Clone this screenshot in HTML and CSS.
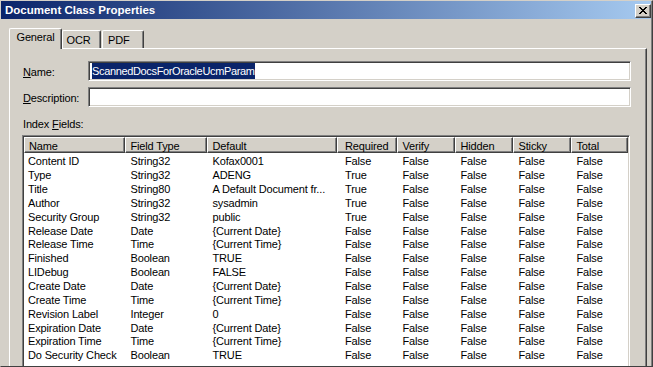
FILE: index.html
```html
<!DOCTYPE html>
<html lang="en">
<head>
    <meta charset="UTF-8">
    <title>Document Class Properties</title>
    <link rel="stylesheet" href="styles.css">
</head>
<body>
    <div class="window">
        <div class="titlebar">
            <span class="title">Document Class Properties</span>
            <button class="close" type="button">
                <svg width="14" height="12" viewBox="0 0 14 12" shape-rendering="crispEdges">
                    <path d="M3 2h2v1h-2z M9 2h2v1h-2z M4 3h2v1h-2z M8 3h2v1h-2z M5 4h4v1h-4z M6 5h2v1h-2z M5 6h4v1h-4z M4 7h2v1h-2z M8 7h2v1h-2z M3 8h2v1h-2z M9 8h2v1h-2z" fill="#000"/>
                </svg>
            </button>
        </div>

        <div class="client">
            <div class="tabs">
                <div class="tab tab-active">General</div>
                <div class="tab tab-ocr">OCR</div>
                <div class="tab tab-pdf">PDF</div>
            </div>

            <div class="panel">
                <div class="field">
                    <label><u>N</u>ame:</label>
                    <div class="textbox"><span class="selected">ScannedDocsForOracleUcmParam</span></div>
                </div>
                <div class="field field-desc">
                    <label><u>D</u>escription:</label>
                    <div class="textbox"></div>
                </div>

                <div class="list-label">Index <u>F</u>ields:</div>

                <div class="listview">
                    <div class="lv-row lv-header">
                        <span>Name</span><span>Field Type</span><span>Default</span><span>Required</span><span>Verify</span><span>Hidden</span><span>Sticky</span><span>Total</span>
                    </div>
                    <div class="lv-body">
                        <div class="lv-row"><span>Content ID</span><span>String32</span><span>Kofax0001</span><span>False</span><span>False</span><span>False</span><span>False</span><span>False</span></div>
                        <div class="lv-row"><span>Type</span><span>String32</span><span>ADENG</span><span>True</span><span>False</span><span>False</span><span>False</span><span>False</span></div>
                        <div class="lv-row"><span>Title</span><span>String80</span><span>A Default Document fr...</span><span>True</span><span>False</span><span>False</span><span>False</span><span>False</span></div>
                        <div class="lv-row"><span>Author</span><span>String32</span><span>sysadmin</span><span>True</span><span>False</span><span>False</span><span>False</span><span>False</span></div>
                        <div class="lv-row"><span>Security Group</span><span>String32</span><span>public</span><span>True</span><span>False</span><span>False</span><span>False</span><span>False</span></div>
                        <div class="lv-row"><span>Release Date</span><span>Date</span><span>{Current Date}</span><span>False</span><span>False</span><span>False</span><span>False</span><span>False</span></div>
                        <div class="lv-row"><span>Release Time</span><span>Time</span><span>{Current Time}</span><span>False</span><span>False</span><span>False</span><span>False</span><span>False</span></div>
                        <div class="lv-row"><span>Finished</span><span>Boolean</span><span>TRUE</span><span>False</span><span>False</span><span>False</span><span>False</span><span>False</span></div>
                        <div class="lv-row"><span>LIDebug</span><span>Boolean</span><span>FALSE</span><span>False</span><span>False</span><span>False</span><span>False</span><span>False</span></div>
                        <div class="lv-row"><span>Create Date</span><span>Date</span><span>{Current Date}</span><span>False</span><span>False</span><span>False</span><span>False</span><span>False</span></div>
                        <div class="lv-row"><span>Create Time</span><span>Time</span><span>{Current Time}</span><span>False</span><span>False</span><span>False</span><span>False</span><span>False</span></div>
                        <div class="lv-row"><span>Revision Label</span><span>Integer</span><span>0</span><span>False</span><span>False</span><span>False</span><span>False</span><span>False</span></div>
                        <div class="lv-row"><span>Expiration Date</span><span>Date</span><span>{Current Date}</span><span>False</span><span>False</span><span>False</span><span>False</span><span>False</span></div>
                        <div class="lv-row"><span>Expiration Time</span><span>Time</span><span>{Current Time}</span><span>False</span><span>False</span><span>False</span><span>False</span><span>False</span></div>
                        <div class="lv-row"><span>Do Security Check</span><span>Boolean</span><span>TRUE</span><span>False</span><span>False</span><span>False</span><span>False</span><span>False</span></div>
                    </div>
                </div>
            </div>
        </div>
    </div>
</body>
</html>
```

FILE: styles.css
```css
body {
    margin: 0;
    background: #D4D0C8;
    font-family: 'Liberation Sans', Arial, sans-serif;
    font-size: 11px;
    letter-spacing: -0.15px;
    color: #000;
}

.window {
    width: 653px;
    height: 367px;
    box-sizing: border-box;
    overflow: hidden;
    background: #D4D0C8;
    border-top: 1px solid #D4D0C8;
    border-left: 1px solid #D4D0C8;
    border-right: 1px solid #404040;
    border-bottom: 1px solid #404040;
    box-shadow: inset -1px 0 #808080;
}

/* title bar */
.titlebar {
    display: flex;
    align-items: flex-start;
    height: 18px;
    margin-right: 1px;
    background: linear-gradient(to right, #0A246A, #A6CAF0);
}

.title {
    flex: 1;
    padding-left: 4px;
    color: #fff;
    font-weight: bold;
    font-size: 11.5px;
    letter-spacing: 0;
    line-height: 18px;
}

.close {
    width: 16px;
    height: 14px;
    margin-top: 3px;
    padding: 0;
    box-sizing: border-box;
    background: #D4D0C8;
    border: 1px solid;
    border-color: #fff #404040 #404040 #fff;
    box-shadow: inset -1px -1px #808080;
}

.close svg {
    display: block;
}

/* tabs */
.client {
    padding: 9px 5px 0 8px;
}

.tabs {
    display: flex;
    align-items: flex-end;
    height: 20px;
}

.tab {
    height: 18px;
    box-sizing: border-box;
    padding-top: 2.5px;
    line-height: 13px;
    background: #D4D0C8;
    border-top: 1px solid #fff;
    border-left: 1px solid #fff;
    border-right: 1px solid #404040;
    border-radius: 2px 2px 0 0;
    box-shadow: inset -1px 0 #808080;
    white-space: nowrap;
}

.tab-active {
    position: relative;
    z-index: 1;
    width: 53px;
    height: 21px;
    margin-bottom: -1px;
    padding-top: 2px;
    padding-left: 6.5px;
}

.tab-ocr {
    width: 39px;
    padding-left: 3.5px;
}

.tab-pdf {
    width: 42px;
    margin-left: 1px;
    padding-left: 5px;
}

.panel {
    height: 330px;
    padding: 12px 0 0 12px;
    border-top: 1px solid #fff;
    border-left: 1px solid #fff;
    border-right: 1px solid #404040;
    box-shadow: inset -1px 0 #808080;
}

/* name / description */
.field {
    display: flex;
    align-items: center;
    height: 20px;
}

.field-desc {
    margin-top: 6px;
}

.field label {
    width: 66px;
    box-sizing: border-box;
    padding: 3px 0 0 1px;
    line-height: 13px;
}

.textbox {
    display: flex;
    width: 543px;
    height: 20px;
    box-sizing: border-box;
    padding: 1px 0 1px 3px;
    background: #fff;
    border: 1px solid;
    border-color: #808080 #fff #fff #808080;
    box-shadow: inset 1px 1px #404040, inset -1px -1px #D4D0C8;
}

.selected {
    height: 16px;
    line-height: 16px;
    letter-spacing: -0.35px;
    background: #0A246A;
    color: #fff;
    white-space: nowrap;
}

.list-label {
    margin-top: 11px;
    padding-left: 1px;
    height: 13px;
    line-height: 13px;
}

/* list view */
.listview {
    width: 608px;
    height: 260px;
    margin-top: 4px;
    box-sizing: border-box;
    padding: 1px;
    background: #fff;
    border: 1px solid;
    border-color: #808080 #fff #fff #808080;
    box-shadow: inset 1px 1px #404040, inset -1px -1px #D4D0C8;
}

.lv-row {
    display: grid;
    grid-template-columns: 101px 82px 130px 60px 58px 58px 58px 57px;
}

.lv-row span {
    white-space: nowrap;
    overflow: hidden;
}

.lv-header span {
    height: 16px;
    box-sizing: border-box;
    padding: 1px 0 0 4.5px;
    line-height: 14px;
    background: #D4D0C8;
    border-top: 1px solid #fff;
    border-left: 1px solid #fff;
    border-right: 1px solid #404040;
    border-bottom: 1px solid #404040;
    box-shadow: inset -1px -1px #808080;
}

.lv-header span:first-child {
    padding-left: 4px;
}

.lv-header span:nth-child(4) {
    padding-left: 7px;
}

.lv-body {
    padding-top: 2.4px;
}

.lv-body span {
    height: 13.85px;
    line-height: 13.85px;
    padding-left: 5.5px;
}

.lv-body span:first-child {
    padding-left: 4px;
}

.lv-body span:nth-child(4) {
    padding-left: 8px;
}
```
